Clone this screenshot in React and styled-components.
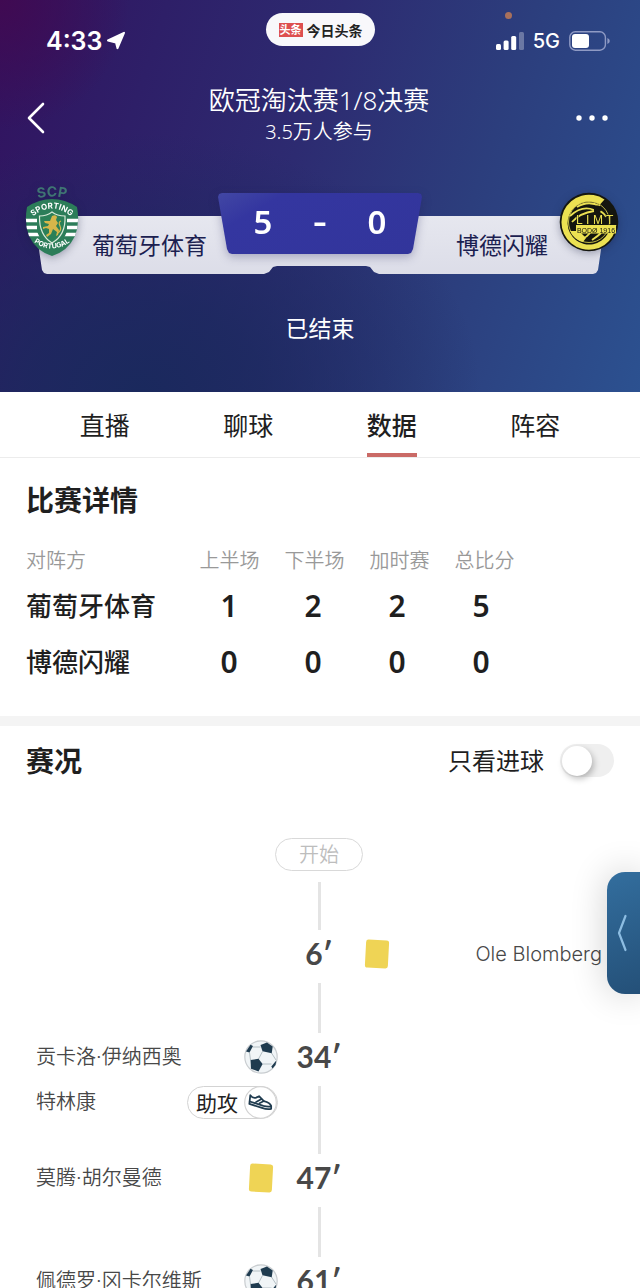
import React, { useState } from "react";
import styled, { createGlobalStyle } from "styled-components";

const GlobalStyle = createGlobalStyle`
  *, *::before, *::after { box-sizing: border-box; }
  body {
    margin: 0;
    background: #fff;
    color: #1f1f1f;
    font-family: "Noto Sans", "Noto Sans CJK SC", sans-serif;
  }
  button {
    border: 0;
    padding: 0;
    background: none;
    color: inherit;
    font: inherit;
    cursor: pointer;
  }
`;

const Screen = styled.div`
  position: relative;
  height: 100vh;
  overflow: hidden auto;
  scrollbar-width: none;
`;

/* ---------- hero ---------- */

const Hero = styled.header`
  padding-bottom: 48px;
  color: #fff;
  background:
    radial-gradient(circle at 0 0, #400a52 0, rgba(64, 10, 82, 0) 130px),
    radial-gradient(ellipse 340px 260px at 22% 100%, #1a295d 0, rgba(26, 41, 93, 0.75) 35%, rgba(28, 42, 100, 0) 100%),
    linear-gradient(108deg, #32125f 0%, #2e1f68 22%, #2d2b71 45%, #2c3e7d 70%, #2c5190 100%);
`;

const StatusBar = styled.div`
  display: grid;
  grid-template-columns: 1fr auto 1fr;
  align-items: center;
  height: 82px;
  padding: 0 30px 0 46px;
`;

const Clock = styled.div`
  display: flex;
  align-items: center;
  gap: 4px;
  font: 600 25px/32px Inter, sans-serif;
`;

const AppPill = styled.div`
  display: flex;
  align-items: center;
  align-self: start;
  gap: 4px;
  height: 33px;
  margin: 13px 16px 0 0;
  padding: 0 12px 0 13px;
  border-radius: 17px;
  background: #f8f8fb;
  color: #222;
  font-weight: 700;
  font-size: 14px;
`;

const AppMark = styled.span`
  padding: 0 1px;
  background: #dd4f4f;
  color: #fff;
  font-size: 11px;
  line-height: 14px;
`;

const Signals = styled.div`
  position: relative;
  display: flex;
  align-items: center;
  justify-content: flex-end;
  gap: 9px;
  font: 500 20px/32px Inter, sans-serif;
`;

const MicDot = styled.i`
  position: absolute;
  top: -13px;
  right: 98px;
  width: 7px;
  height: 7px;
  border-radius: 50%;
  background: #a8705c;
`;

const NavBar = styled.div`
  display: flex;
  align-items: center;
  justify-content: space-between;
  height: 72px;
  padding: 0 28px 0 26px;
`;

const IconButton = styled.button`
  display: flex;
  align-items: center;
  justify-content: ${(p) => (p.$end ? "flex-end" : "flex-start")};
  width: 40px;
  height: 44px;
`;

const Heading = styled.div`
  padding-bottom: 8px;
  text-align: center;
`;

const MatchTitle = styled.h1`
  margin: 0;
  font-weight: 350;
  font-size: 26px;
  line-height: 36px;
`;

const Audience = styled.p`
  margin: 0;
  font-weight: 350;
  font-size: 20px;
  line-height: 28px;
`;

const Scoreboard = styled.div`
  display: grid;
  align-items: start;
  margin-top: 33px;
  padding: 0 22px;
  & > * { grid-area: 1 / 1; }
`;

const TeamPlate = styled.div`
  display: flex;
  align-items: center;
  justify-content: space-between;
  height: 58px;
  margin: 29px 12px 0;
  padding: 0 58px;
  color: #1b2050;
  font-size: 23px;
  line-height: 32px;
  background: linear-gradient(#e6e7ef, #dcdde8);
  clip-path: polygon(
    0 0, 100% 0,
    calc(100% - 8px) calc(100% - 4px), calc(100% - 10px) calc(100% - 1px), calc(100% - 13px) 100%,
    calc(50% + 59px) 100%, calc(50% + 54px) calc(100% - 2px), calc(50% + 50px) calc(100% - 7px), calc(50% + 46px) calc(100% - 8px),
    calc(50% - 43px) calc(100% - 8px), calc(50% - 47px) calc(100% - 7px), calc(50% - 51px) calc(100% - 2px), calc(50% - 56px) 100%,
    13px 100%, 10px calc(100% - 1px), 8px calc(100% - 4px)
  );
`;

const ScoreShadow = styled.div`
  justify-self: center;
  margin-top: 6px;
  filter: drop-shadow(0 3px 5px rgba(30, 30, 90, 0.3));
`;

const ScorePlate = styled.div`
  display: grid;
  grid-template-columns: repeat(3, 57px);
  justify-content: center;
  width: 204px;
  height: 61px;
  font-weight: 600;
  font-size: 33px;
  line-height: 58px;
  text-align: center;
  background: linear-gradient(150deg, #4247a4 0, #3436a0 22%, #32359b 100%);
  clip-path: polygon(
    0 4px, 1px 1px, 4px 0, calc(100% - 4px) 0, calc(100% - 1px) 1px, 100% 4px,
    calc(100% - 9px) calc(100% - 5px), calc(100% - 11px) calc(100% - 1px), calc(100% - 14px) 100%,
    14px 100%, 11px calc(100% - 1px), 9px calc(100% - 5px)
  );
`;

const ScoreDash = styled.span`
  font-family: Inter, sans-serif;
`;

const Crest = styled.div`
  display: flex;
  justify-self: ${(p) => p.$side};
  filter: drop-shadow(0 2px 4px rgba(20, 25, 60, 0.35));
  svg { overflow: visible; }
`;

const MatchState = styled.p`
  margin: 38px 0 0;
  font-size: 23px;
  line-height: 32px;
  text-align: center;
`;

/* ---------- tabs ---------- */

const Tabs = styled.nav`
  display: flex;
  height: 66px;
  padding: 0 33px;
  border-bottom: 1px solid #ececec;
`;

const Tab = styled.button`
  display: flex;
  flex: 1;
  justify-content: center;
  font-weight: ${(p) => (p.$active ? 500 : 400)};
  font-size: 25px;
  line-height: 61px;

  span {
    border-bottom: 4px solid ${(p) => (p.$active ? "#ca6a66" : "transparent")};
    height: 65px;
    padding-top: 3px;
  }
`;

/* ---------- sections ---------- */

const SectionTitle = styled.h2`
  margin: 0;
  font-weight: 600;
  font-size: 28px;
  line-height: 40px;
`;

const Details = styled.section`
  padding: 22px 26px 27px;
  border-bottom: 10px solid #f4f4f4;
`;

const PeriodTable = styled.table`
  display: block;
  margin-top: 21px;
  thead, tbody { display: block; }
`;

const PeriodRow = styled.tr`
  display: grid;
  grid-template-columns: 161px repeat(4, ${(p) => (p.$head ? 85 : 84)}px);
  align-items: center;
  height: ${(p) => (p.$head ? 36 : 56)}px;
`;

const HeadCell = styled.th`
  padding: 0;
  color: #999;
  font-weight: 350;
  font-size: 20px;
  text-align: center;
  &:first-child { text-align: left; }
`;

const TeamCell = styled.th`
  padding: 0;
  font-weight: 500;
  font-size: 26px;
  text-align: left;
`;

const GoalCell = styled.td`
  padding: 0;
  font-weight: 600;
  font-size: 30px;
  text-align: center;
`;

const EventsHead = styled.div`
  display: flex;
  align-items: center;
  justify-content: space-between;
  height: 69px;
  padding: 0 26px;
`;

const GoalsOnly = styled.label`
  display: flex;
  align-items: center;
  gap: 16px;
  font-size: 24px;
  line-height: 32px;
`;

const Switch = styled.input`
  appearance: none;
  display: flex;
  align-items: center;
  width: 54px;
  height: 33px;
  margin: 0;
  padding: 0 2px;
  border-radius: 17px;
  background: ${(p) => (p.checked ? "#ca6a66" : "#efefef")};
  cursor: pointer;

  &::before {
    content: "";
    width: 30px;
    height: 30px;
    margin-left: ${(p) => (p.checked ? "20px" : "0")};
    border-radius: 50%;
    background: #fff;
    box-shadow: 2px 3px 6px rgba(0, 0, 0, 0.25);
  }
`;

const Timeline = styled.div`
  display: flex;
  flex-direction: column;
  padding: 43px 38px 0 36px;
`;

const StartPill = styled.div`
  align-self: center;
  width: 88px;
  height: 33px;
  margin-bottom: 11px;
  border: 1px solid #d9d9d9;
  border-radius: 17px;
  color: #bdbdbd;
  font-weight: 350;
  font-size: 20px;
  line-height: 32px;
  text-align: center;
`;

const Event = styled.div`
  display: grid;
  grid-template-columns: 1fr 82px 1fr;
`;

const EventSide = styled.div`
  display: flex;
  flex-direction: ${(p) => (p.$right ? "row-reverse" : "row")};
  align-items: center;
  justify-content: space-between;
  height: 47px;
  margin-bottom: 6px;
`;

const Player = styled.span`
  color: #484848;
  font: 350 20px/32px Inter, "Noto Sans CJK SC", sans-serif;
`;

const IconSlot = styled.span`
  display: flex;
  justify-content: center;
  width: 34px;
`;

const Minute = styled.time`
  color: #484848;
  font: 700 30px/47px Lato, "Noto Sans CJK SC", sans-serif;
  text-align: center;
`;

const Connector = styled.span`
  justify-self: center;
  align-self: center;
  width: 3px;
  height: ${(p) => p.$length}px;
  background: #e4e4e4;
`;

const Assist = styled.div`
  display: flex;
  align-items: flex-start;
  justify-content: space-between;
`;

const AssistPill = styled.span`
  display: flex;
  align-items: center;
  justify-content: space-between;
  width: 91px;
  height: 33px;
  padding-left: 8px;
  border: 1px solid #d3d3d3;
  border-radius: 17px;
  color: #222;
  font-size: 21px;
  line-height: 30px;
`;

const SideTab = styled.button`
  position: fixed;
  top: 872px;
  right: 0;
  display: flex;
  align-items: center;
  width: 33px;
  height: 122px;
  padding-left: 10px;
  border-radius: 18px 0 0 18px;
  background: linear-gradient(160deg, #336e9e, #245078);
  box-shadow: 0 0 36px rgba(0, 0, 0, 0.2);
`;

/* ---------- drawings ---------- */

const LocationArrow = () => (
  <svg width="20" height="20" viewBox="0 0 20 20" fill="#fff" stroke="#fff" strokeWidth="2" strokeLinejoin="round" aria-hidden="true">
    <path d="M18 1.8 11.500 17.200 10 11.500 2 9.500Z" />
  </svg>
);

const SignalBars = () => (
  <svg width="28" height="20" viewBox="0 0 28 20" fill="#fff" aria-hidden="true">
    <rect x="0" y="13" width="5" height="6" rx="1.5" />
    <rect x="7.6" y="9.5" width="5" height="9.5" rx="1.5" />
    <rect x="15.2" y="5" width="5" height="14" rx="1.5" />
    <rect x="23" y="1" width="5" height="18" rx="1.5" opacity=".3" />
  </svg>
);

const Battery = () => (
  <svg width="41" height="20" viewBox="0 0 41 20" aria-hidden="true">
    <rect x=".8" y=".8" width="35.6" height="18.4" rx="5.5" fill="none" stroke="#8f9ac4" strokeWidth="1.4" />
    <rect x="3" y="3" width="17" height="14" rx="3" fill="#fff" />
    <path d="M38.4 7q2.4 1 2.4 3t-2.4 3z" fill="#8f9ac4" />
  </svg>
);

const BackIcon = () => (
  <svg width="20" height="32" viewBox="0 0 20 32" fill="none" stroke="#fff" strokeWidth="2.6" strokeLinecap="round" strokeLinejoin="round" aria-hidden="true">
    <path d="M17 2 3 16l14 14" />
  </svg>
);

const MoreIcon = () => (
  <svg width="36" height="6" viewBox="0 0 36 6" fill="#fff" aria-hidden="true">
    <circle cx="3" cy="3" r="2.7" />
    <circle cx="16" cy="3" r="2.7" />
    <circle cx="29" cy="3" r="2.7" />
  </svg>
);

const SportingCrest = () => (
  <svg width="60" height="70" viewBox="0 0 60 70" role="img" aria-label="SCP Sporting Portugal">
    <defs>
      <clipPath id="shield">
        <path d="M5 20Q17 12 30 12T55 20Q58 36 53 49Q46 64 30 69Q14 64 7 49Q2 36 5 20Z" />
      </clipPath>
      <path id="arcTop" d="M8 14Q30 5 52 14" />
      <path id="arcMid" d="M8 32Q30 11 52 32" />
      <path id="arcLow" d="M8 52Q30 71 52 52" />
    </defs>
    <text fill="#3f7573" fontFamily="Inter" fontWeight="700" fontSize="14" textAnchor="middle">
      <textPath href="#arcTop" startOffset="50%">SCP</textPath>
    </text>
    <g clipPath="url(#shield)">
      <rect width="60" height="70" fill="#2c7d59" />
      <path d="M0 33.5h60M0 40.5h60M0 47.5h60" stroke="#fff" strokeWidth="3.4" />
      <path d="M17 27h26v17q-3 9-13 14q-10-5-13-14z" fill="#2c7d59" stroke="#2c7d59" strokeWidth="4" />
    </g>
    <path d="M17.5 29Q25 29 30 25Q35 29 43 29Q44 48 30 56Q17 48 17.5 29Z" fill="#2b8058" stroke="#d9e9d9" strokeWidth="1.2" />
    <path d="M30 29q4-2 5 1l-1 3 2 3-2 3 3 4-1 5-2 1 1-4-4-3-2 5-4 3-1-2 3-2v-4l-3-1-3 1v-2l5-1 1-2-4-1-1-2 3 0 3 0z" fill="#d6b64a" />
    <path d="M36 46q4-3 2-7t1-5" fill="none" stroke="#d6b64a" strokeWidth="1.2" />
    <g fill="#fff" fontFamily="Inter" fontWeight="700" textAnchor="middle">
      <text fontSize="8">
        <textPath href="#arcMid" startOffset="50%">SPORTING</textPath>
      </text>
      <text fontSize="7">
        <textPath href="#arcLow" startOffset="50%">PORTUGAL</textPath>
      </text>
    </g>
  </svg>
);

const GlimtCrest = () => (
  <svg width="60" height="70" viewBox="0 0 60 70" role="img" aria-label="Bodø Glimt 1916">
    <circle cx="31" cy="35" r="29.3" fill="#15160f" />
    <path d="M46.5 12.5A27.5 27.5 0 1 0 58.3 38H52.5A21.5 21.5 0 1 1 42 17.5Z" fill="#ece152" />
    <circle cx="31" cy="35" r="20.5" fill="#15160f" stroke="#ece152" strokeWidth=".8" />
    <g fill="none" stroke="#ece152" strokeWidth="1.8">
      <path d="M12 29Q24 18 36 23M14 35Q22 26 36 24M19 20Q30 13 42 19M34 53Q40 49 43 46M24 52Q29 50 32 46M42 24Q47 27 48 30" />
    </g>
    <path d="M12 44q4 9 13 11l3-4-7-7z" fill="#ece152" />
    <circle cx="39.5" cy="22" r="3.6" fill="#15160f" />
    <rect x="18" y="38" width="40" height="8.5" fill="#ece152" />
    <text x="18 28 35 48" y="36.5" fill="#ece152" stroke="#15160f" strokeWidth="1" paintOrder="stroke" fontFamily="Liberation Sans" fontSize="12">LIMT</text>
    <text x="38" y="45.5" fill="#15160f" fontFamily="Liberation Sans" fontSize="7" textAnchor="middle">BODØ 1916</text>
  </svg>
);

const BallIcon = () => (
  <svg width="34" height="34" viewBox="0 0 34 34" role="img" aria-label="进球">
    <circle cx="17" cy="17" r="16.2" fill="#f1f5f7" stroke="#c9cdd0" strokeWidth="1.2" />
    <path d="M8.5 7H16.5M18.5 11.5 14.5 19M27.5 13 32 20M5.5 12.5 6.5 20M18.5 24H27.5" fill="none" stroke="#b4bfc4" strokeWidth="1" />
    <g fill="#1f3b4f">
      <path d="M16.5 5 23 2.5 28.7 6.5 27.7 13.2 18.5 11.3Z" />
      <path d="M6.5 20 14.5 18.8 18.6 24 14.5 31.5 7 28.7Z" />
      <path d="M2 11.5 6.500 4.8 9 6 5.5 12.5Z" />
      <path d="M27.3 26.5 32.3 20.5 31.5 25 28.5 28.5Z" />
    </g>
  </svg>
);

const CardIcon = () => (
  <svg width="26" height="32" viewBox="0 0 26 32" role="img" aria-label="黄牌">
    <rect x="1.5" y="2" width="23" height="28" rx="2.5" fill="#efd455" transform="rotate(3 13 16)" />
  </svg>
);

const ShoeIcon = () => (
  <svg width="33" height="33" viewBox="0 0 34 34" aria-hidden="true">
    <circle cx="17" cy="17" r="16.3" fill="#fff" stroke="#d3d3d3" strokeWidth="1.2" />
    <g fill="none" stroke="#1f3b4f" strokeWidth="1.8" strokeLinejoin="round" strokeLinecap="round">
      <path d="M6.5 9.500Q9 13 12.5 12L15.5 10.500 20.5 15.500Q27 17 28 20.500V23.500Q24 24.500 18.500 22.500L5.500 18.500Z" />
      <path d="M6 16 20 20.500Q24 21.500 28 21M12.500 16.500 18 13.500M16 17.800 20.500 15.500" />
    </g>
  </svg>
);

const SideChevron = () => (
  <svg width="12" height="38" viewBox="0 0 12 38" fill="none" stroke="#8dbde2" strokeWidth="2.2" strokeLinecap="round" strokeLinejoin="round" aria-hidden="true">
    <path d="M8.500 2 2 19l6.500 17" />
  </svg>
);

/* ---------- data ---------- */

const tabs = ["直播", "聊球", "数据", "阵容"];
const periods = ["对阵方", "上半场", "下半场", "加时赛", "总比分"];
const teams = [
  { name: "葡萄牙体育", goals: [1, 2, 2, 5] },
  { name: "博德闪耀", goals: [0, 0, 0, 0] },
];
const events = [
  { minute: 6, side: "right", kind: "card", player: "Ole Blomberg" },
  { minute: 34, side: "left", kind: "goal", player: "贡卡洛·伊纳西奥", assist: "特林康" },
  { minute: 47, side: "left", kind: "card", player: "莫腾·胡尔曼德" },
  { minute: 61, side: "left", kind: "goal", player: "佩德罗·冈卡尔维斯" },
];

function Side({ event, right }) {
  const shown = (event.side === "right") === Boolean(right);
  return (
    <EventSide $right={right}>
      {shown && (
        <>
          <Player>{event.player}</Player>
          <IconSlot>{event.kind === "goal" ? <BallIcon /> : <CardIcon />}</IconSlot>
        </>
      )}
    </EventSide>
  );
}

export default function App() {
  const [active, setActive] = useState("数据");
  const [goalsOnly, setGoalsOnly] = useState(false);
  const shownEvents = goalsOnly ? events.filter((e) => e.kind === "goal") : events;

  return (
    <Screen>
      <GlobalStyle />
      <Hero>
        <StatusBar>
          <Clock>4:33<LocationArrow /></Clock>
          <AppPill><AppMark>头条</AppMark>今日头条</AppPill>
          <Signals><MicDot /><SignalBars />5G<Battery /></Signals>
        </StatusBar>
        <NavBar>
          <IconButton aria-label="返回"><BackIcon /></IconButton>
          <Heading>
            <MatchTitle>欧冠淘汰赛1/8决赛</MatchTitle>
            <Audience>3.5万人参与</Audience>
          </Heading>
          <IconButton $end aria-label="更多"><MoreIcon /></IconButton>
        </NavBar>
        <Scoreboard>
          <TeamPlate>
            <span>葡萄牙体育</span>
            <span>博德闪耀</span>
          </TeamPlate>
          <ScoreShadow>
            <ScorePlate><span>5</span><ScoreDash>-</ScoreDash><span>0</span></ScorePlate>
          </ScoreShadow>
          <Crest $side="start"><SportingCrest /></Crest>
          <Crest $side="end"><GlimtCrest /></Crest>
        </Scoreboard>
        <MatchState>已结束</MatchState>
      </Hero>

      <Tabs>
        {tabs.map((t) => (
          <Tab key={t} $active={t === active} onClick={() => setActive(t)}><span>{t}</span></Tab>
        ))}
      </Tabs>

      <Details>
        <SectionTitle>比赛详情</SectionTitle>
        <PeriodTable>
          <thead>
            <PeriodRow $head>
              {periods.map((p) => <HeadCell key={p} scope="col">{p}</HeadCell>)}
            </PeriodRow>
          </thead>
          <tbody>
            {teams.map((team) => (
              <PeriodRow key={team.name}>
                <TeamCell scope="row">{team.name}</TeamCell>
                {team.goals.map((g, i) => <GoalCell key={i}>{g}</GoalCell>)}
              </PeriodRow>
            ))}
          </tbody>
        </PeriodTable>
      </Details>

      <section>
        <EventsHead>
          <SectionTitle>赛况</SectionTitle>
          <GoalsOnly>
            只看进球
            <Switch type="checkbox" role="switch" checked={goalsOnly} onChange={(e) => setGoalsOnly(e.target.checked)} />
          </GoalsOnly>
        </EventsHead>
        <Timeline>
          <StartPill>开始</StartPill>
          <Connector $length={48} />
          {shownEvents.map((event, i) => (
            <Event key={event.minute}>
              <Side event={event} />
              <Minute>{event.minute}′</Minute>
              <Side event={event} right />
              {i < shownEvents.length - 1 && (
                <>
                  <Assist>
                    {event.assist && (
                      <>
                        <Player>{event.assist}</Player>
                        <AssistPill>助攻<ShoeIcon /></AssistPill>
                      </>
                    )}
                  </Assist>
                  <Connector $length={event.assist ? 68 : 50} />
                </>
              )}
            </Event>
          ))}
        </Timeline>
      </section>
      <SideTab aria-label="展开"><SideChevron /></SideTab>
    </Screen>
  );
}
